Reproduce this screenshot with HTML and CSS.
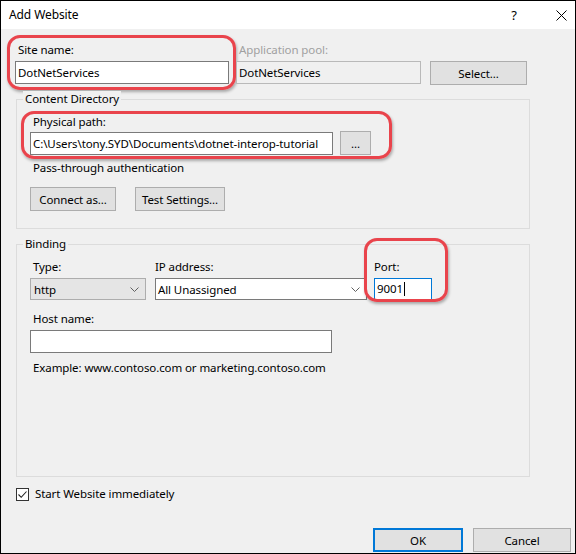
FILE: index.html
```html
<!DOCTYPE html>
<html>
<head>
<meta charset="utf-8">
<link rel="stylesheet" href="styles.css">
</head>
<body>
<div class="window">
  <div class="titlebar">
    <span class="title">Add Website</span>
    <span class="help">?</span>
    <span class="close"><svg width="11" height="11" viewBox="0 0 11 11"><path d="M0.5 0.5 L10.5 10.5 M10.5 0.5 L0.5 10.5" stroke="#000" stroke-width="1" fill="none"/></svg></span>
  </div>
  <div class="body">
    <div class="top-row">
      <div class="field site">
        <div class="label">Site name:</div>
        <div class="input site-input">DotNetServices</div>
        <span class="mark mark-site"></span>
      </div>
      <div class="field pool">
        <div class="label disabled">Application pool:</div>
        <div class="input readonly">DotNetServices</div>
      </div>
      <div class="btn select-btn">Select...</div>
    </div>

    <div class="group content-dir">
      <span class="group-title">Content Directory</span>
      <div class="field path">
        <div class="label">Physical path:</div>
        <div class="path-row">
          <div class="input path-input">C:\Users\tony.SYD\Documents\dotnet-interop-tutorial</div>
          <div class="btn dots-btn">...</div>
        </div>
        <span class="mark mark-path"></span>
      </div>
      <div class="note">Pass-through authentication</div>
      <div class="btn-row">
        <div class="btn connect-btn">Connect as...</div>
        <div class="btn test-btn">Test Settings...</div>
      </div>
    </div>

    <div class="group binding">
      <span class="group-title">Binding</span>
      <div class="bind-row">
        <div class="field type">
          <div class="label">Type:</div>
          <div class="combo combo-disabled"><span>http</span><svg class="chev" width="9" height="5" viewBox="0 0 9 5"><path d="M0.5 0.5 L4.5 4.5 L8.5 0.5" stroke="#606060" stroke-width="1" fill="none"/></svg></div>
        </div>
        <div class="field ip">
          <div class="label nopad">IP address:</div>
          <div class="combo"><span>All Unassigned</span><svg class="chev" width="9" height="5" viewBox="0 0 9 5"><path d="M0.5 0.5 L4.5 4.5 L8.5 0.5" stroke="#606060" stroke-width="1" fill="none"/></svg></div>
        </div>
        <div class="field port">
          <div class="label nopad">Port:</div>
          <div class="input port-input">9001<span class="caret"></span></div>
          <span class="mark mark-port"></span>
        </div>
      </div>
      <div class="field host">
        <div class="label">Host name:</div>
        <div class="input host-input"></div>
      </div>
      <div class="example">Example: www.contoso.com or marketing.contoso.com</div>
    </div>

    <div class="check-row">
      <span class="checkbox"><svg width="11" height="11" viewBox="0 0 11 11"><path d="M1.5 5.5 L4.2 8.3 L9.5 2.5" stroke="#222" stroke-width="1.1" fill="none"/></svg></span>
      <span class="check-label">Start Website immediately</span>
    </div>

    <div class="footer">
      <div class="btn ok-btn">OK</div>
      <div class="btn cancel-btn">Cancel</div>
    </div>
  </div>
</div>
</body>
</html>
```

FILE: styles.css
```css
* { box-sizing: border-box; }
html, body { margin: 0; padding: 0; }
body {
  font-family: "Noto Sans", "Open Sans", sans-serif;
  font-size: 11.5px;
  letter-spacing: -0.1px;
  color: #000;
  background: #fff;
}
.window {
  width: 576px;
  height: 554px;
  border: 1px solid #000;
  background: #f0f0f0;
  display: flex;
  flex-direction: column;
  overflow: hidden;
}
.titlebar {
  height: 28px;
  background: #fff;
  display: flex;
  align-items: center;
  flex-shrink: 0;
}
.title { margin-left: 8px; line-height: 16px; font-size: 12px; }
.help { margin-left: auto; width: 10px; text-align: center; font-size: 13px; }
.close { margin-left: 37px; margin-right: 8px; display: flex; }

.body {
  flex: 1;
  display: flex;
  flex-direction: column;
  padding-left: 14px;
}
.label { line-height: 16px; height: 16px; padding-left: 3px; white-space: nowrap; }
.label.nopad { padding-left: 0; }
.label.disabled { color: #a0a0a0; }
.field { position: relative; }
.input {
  height: 23px;
  border: 1px solid #7a7a7a;
  background: #fff;
  padding-left: 2px;
  line-height: 21px;
  white-space: nowrap;
  overflow: hidden;
}
.label + .input, .label + .combo { margin-top: 3px; }
.input.readonly { background: #f0f0f0; border-color: #b9b9b9; padding-left: 2px; }
.btn {
  height: 24px;
  border: 1px solid #adadad;
  background: #e1e1e1;
  display: flex;
  align-items: center;
  justify-content: center;
  white-space: nowrap;
}

.mark {
  position: absolute;
  border: 3px solid #e9444c;
  border-radius: 13px;
  box-shadow: 1px 2px 3px rgba(0,0,0,0.3);
  pointer-events: none;
}

.top-row { display: flex; align-items: flex-end; padding-top: 13px; }
.site { width: 214px; }
.mark-site { left: -8px; top: -7px; width: 229px; height: 55px; }
.pool { width: 185px; margin-left: 7px; }
.pool .label { padding-left: 3px; }
.select-btn { width: 97px; margin-left: 9px; margin-bottom: -1px; }

.group {
  position: relative;
  margin-left: 1px;
  width: 514px;
  border: 1px solid #dcdcdc;
  padding-left: 13px;
}
.group-title {
  position: absolute;
  top: -9px;
  left: 6px;
  padding: 0 2px;
  background: #f0f0f0;
  line-height: 16px;
}
.content-dir { margin-top: 15px; height: 130px; padding-top: 14px; }
.path-row { display: flex; margin-top: 1px; }
.path-input { width: 303px; margin-top: 1px; }
.dots-btn { width: 31px; margin-left: 7px; }
.mark-path { left: -9px; top: -3px; width: 371px; height: 48px; }
.note { line-height: 16px; padding-left: 3px; margin-top: 5px; }
.btn-row { display: flex; margin-top: 11px; }
.connect-btn { width: 86px; }
.test-btn { width: 90px; margin-left: 19px; }

.binding { margin-top: 15px; height: 233px; padding-top: 14px; }
.bind-row { display: flex; }
.type { width: 116px; }
.ip { width: 212px; margin-left: 9px; }
.port { width: 58px; margin-left: 7px; }
.combo {
  height: 22px;
  border: 1px solid #7a7a7a;
  background: #fff;
  display: flex;
  align-items: center;
  padding-left: 2px;
  padding-right: 6px;
}
.combo span { flex: 1; }
.combo-disabled { background: #e5e5e5; border-color: #adadad; padding-left: 3px; }
.chev { display: block; }
.port-input { border-color: #0078d7; height: 22px; line-height: 20px; display: flex; align-items: center; }
.caret { display: inline-block; width: 1px; height: 14px; background: #000; margin-left: 1px; }
.mark-port { left: -10px; top: -21px; width: 84px; height: 64px; }
.host { margin-top: 11px; width: 302px; }
.host-input { height: 23px; }
.example { line-height: 16px; padding-left: 3px; margin-top: 7px; }

.check-row { display: flex; align-items: center; margin-top: 9px; margin-left: 1px; }
.checkbox {
  width: 13px; height: 13px;
  border: 1px solid #333;
  background: #fff;
  display: flex; align-items: center; justify-content: center;
}
.check-label { margin-left: 6px; line-height: 16px; }

.footer { margin-top: auto; display: flex; justify-content: flex-end; padding-right: 4px; margin-bottom: 1px; }
.ok-btn { width: 90px; border: 2px solid #0078d7; }
.cancel-btn { width: 98px; margin-left: 10px; }
```
